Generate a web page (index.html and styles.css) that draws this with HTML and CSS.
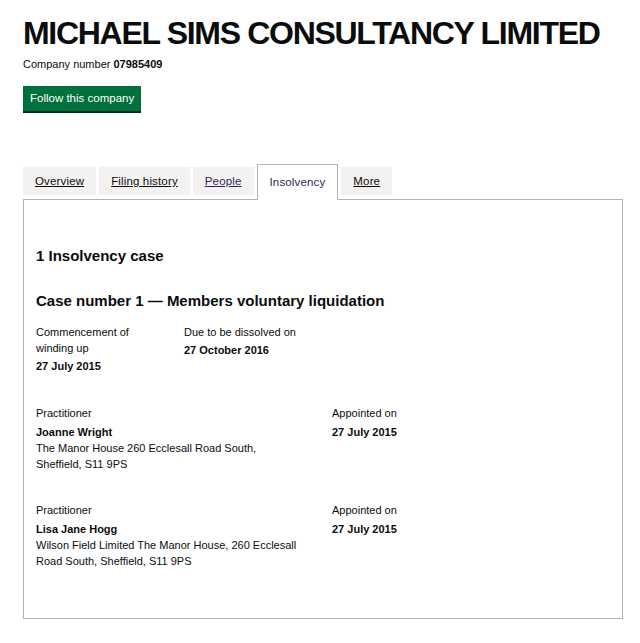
FILE: index.html
```html
<!DOCTYPE html>
<html lang="en">
<head>
<meta charset="utf-8">
<title>MICHAEL SIMS CONSULTANCY LIMITED - Insolvency</title>
<link rel="stylesheet" href="styles.css">
</head>
<body>
<main class="page">
  <h1 class="company-name">MICHAEL SIMS CONSULTANCY LIMITED</h1>
  <p class="company-number">Company number <strong>07985409</strong></p>
  <a class="follow-button" href="#">Follow this company</a>

  <nav class="tabs">
    <a class="tab" href="#">Overview</a>
    <a class="tab" href="#">Filing history</a>
    <a class="tab tab-visited" href="#">People</a>
    <span class="tab tab-active">Insolvency</span>
    <a class="tab" href="#">More</a>
  </nav>

  <section class="panel">
    <h2 class="case-count">1 Insolvency case</h2>
    <h3 class="case-title">Case number 1 — Members voluntary liquidation</h3>

    <div class="dates-row">
      <dl class="field field-date">
        <dt>Commencement of<br>winding up</dt>
        <dd>27 July 2015</dd>
      </dl>
      <dl class="field">
        <dt>Due to be dissolved on</dt>
        <dd>27 October 2016</dd>
      </dl>
    </div>

    <div class="practitioner">
      <div class="field field-wide">
        <div class="label">Practitioner</div>
        <div class="value">Joanne Wright</div>
        <div class="address">The Manor House 260 Ecclesall Road South,<br>Sheffield, S11 9PS</div>
      </div>
      <div class="field">
        <div class="label">Appointed on</div>
        <div class="value">27 July 2015</div>
      </div>
    </div>

    <div class="practitioner">
      <div class="field field-wide">
        <div class="label">Practitioner</div>
        <div class="value">Lisa Jane Hogg</div>
        <div class="address">Wilson Field Limited The Manor House, 260 Ecclesall<br>Road South, Sheffield, S11 9PS</div>
      </div>
      <div class="field">
        <div class="label">Appointed on</div>
        <div class="value">27 July 2015</div>
      </div>
    </div>
  </section>
</main>
</body>
</html>
```

FILE: styles.css
```css
* { box-sizing: border-box; }

html, body {
  margin: 0;
  padding: 0;
  background: #ffffff;
}

body {
  font-family: "Liberation Sans", Arial, sans-serif;
  font-size: 11px;
  line-height: 16px;
  color: #0b0c0c;
}

.page {
  padding: 15px 17px 0 23px;
}

.company-name {
  margin: 0;
  font-size: 32px;
  line-height: 36px;
  font-weight: 700;
  letter-spacing: -1.3px;
  white-space: nowrap;
}

.company-number {
  margin: 5px 0 0;
}

.company-number strong {
  font-weight: 700;
}

.follow-button {
  display: inline-block;
  margin-top: 14px;
  height: 25px;
  padding: 0 7px;
  line-height: 25px;
  font-size: 11.5px;
  color: #ffffff;
  background: #00703c;
  text-decoration: none;
  box-shadow: 0 2px 0 #002d18;
}

.tabs {
  display: flex;
  align-items: flex-end;
  gap: 3px;
  margin-top: 53px;
}

.tab {
  display: block;
  height: 28px;
  line-height: 28px;
  padding: 0 12px;
  margin-bottom: 4px;
  font-size: 11.5px;
  letter-spacing: 0.15px;
  color: #0b0c0c;
  background: #f3f2f1;
  text-decoration: underline;
}

.tab-visited {
  color: #2f1f5c;
}

.tab-active {
  position: relative;
  z-index: 1;
  height: 36px;
  padding: 3px 12px 0;
  margin-bottom: -1px;
  color: #2f1f5c;
  background: #ffffff;
  border: 1px solid #b1b4b6;
  border-bottom: 0;
  text-decoration: none;
}

.panel {
  border: 1px solid #b1b4b6;
  padding: 46px 12px 46px 12px;
  height: 420px;
}

.case-count,
.case-title {
  margin: 0;
  font-size: 15px;
  line-height: 20px;
  font-weight: 700;
}

.case-title {
  margin-top: 25px;
}

.dates-row {
  display: flex;
  margin-top: 13px;
}

.field {
  margin: 0;
}

.field dt {
  margin: 0;
}

.field dd {
  margin: 2px 0 0;
  font-weight: 700;
}

.field-date {
  width: 148px;
}

.practitioner {
  display: flex;
  margin-top: 31px;
}

.practitioner + .practitioner {
  margin-top: 30px;
}

.field-wide {
  width: 296px;
}

.value {
  margin-top: 3px;
  font-weight: 700;
}
```
